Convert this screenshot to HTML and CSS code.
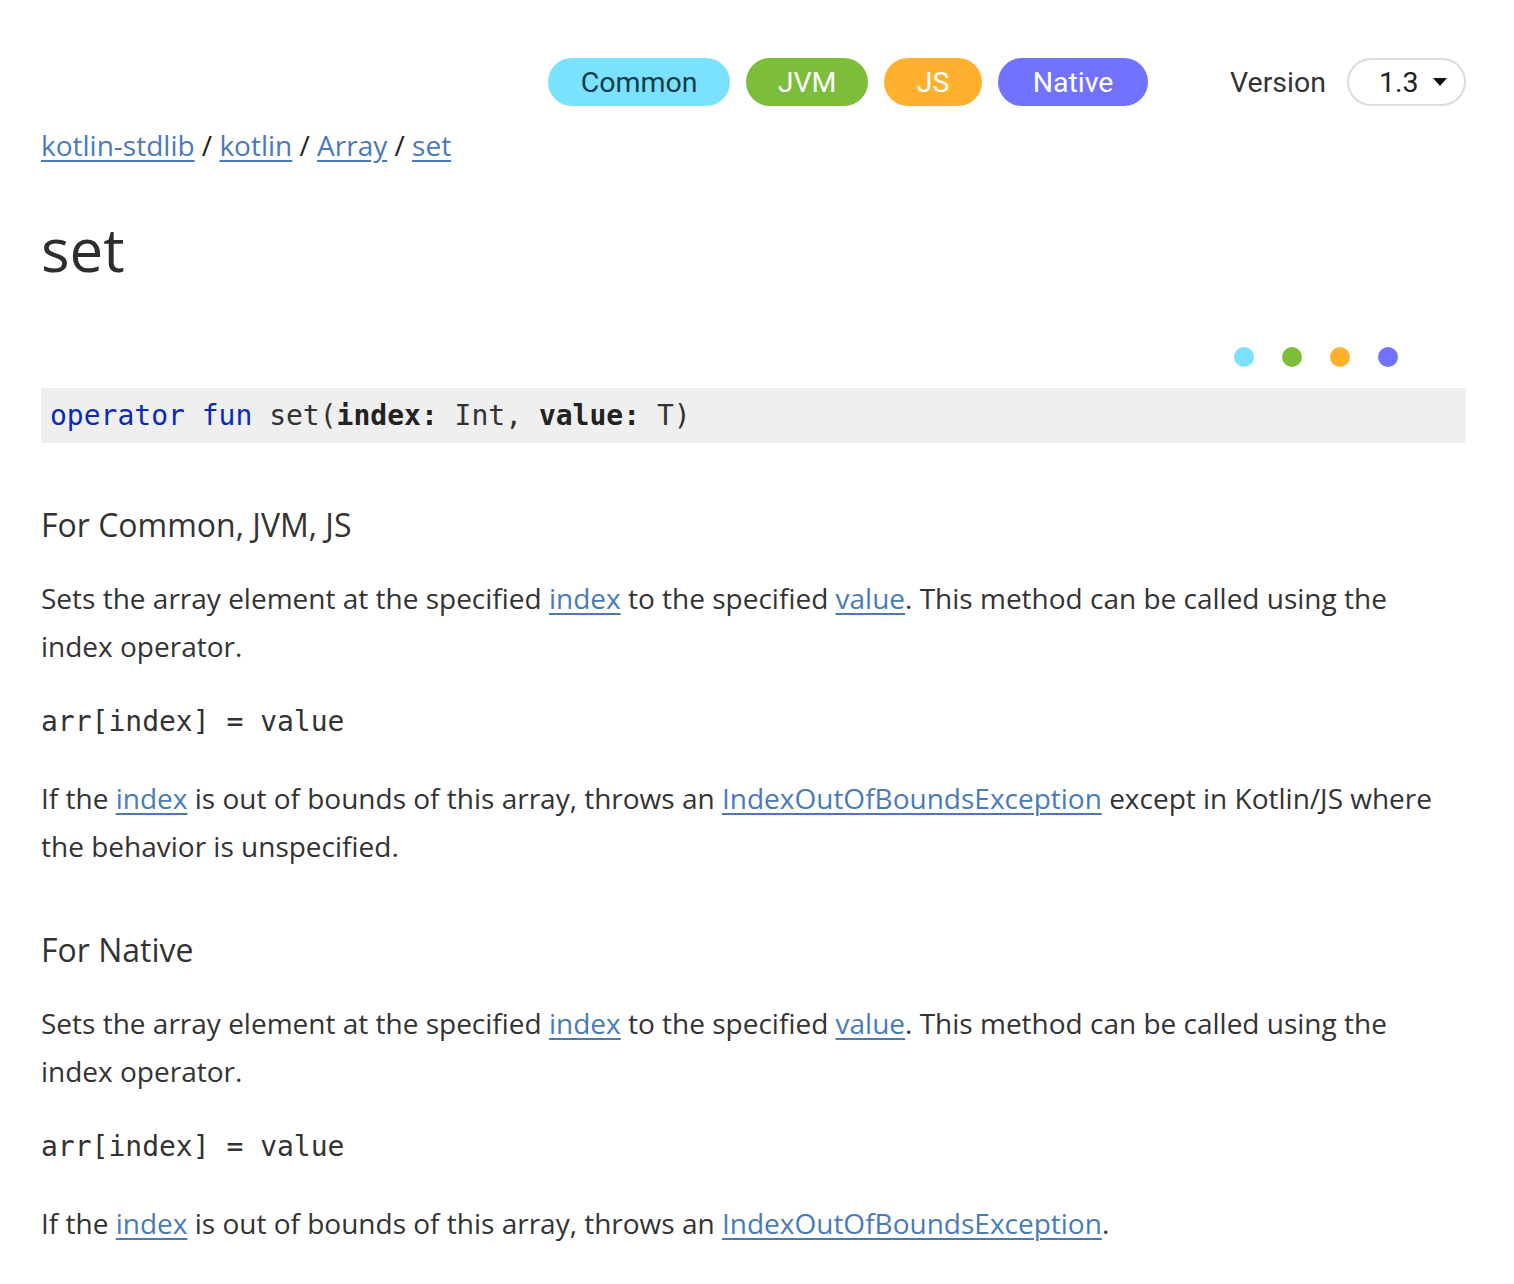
FILE: index.html
```html
<!DOCTYPE html>
<html>
<head>
<meta charset="utf-8">
<link rel="stylesheet" href="styles.css">
</head>
<body>
<div class="page">
  <header class="topbar">
    <div class="platforms">
      <span class="badge common">Common</span>
      <span class="badge jvm">JVM</span>
      <span class="badge js">JS</span>
      <span class="badge native">Native</span>
    </div>
    <div class="version">
      <span class="version-label">Version</span>
      <span class="select">1.3 <span class="caret"></span></span>
    </div>
  </header>

  <nav class="breadcrumbs">
    <a href="#">kotlin-stdlib</a> / <a href="#">kotlin</a> / <a href="#">Array</a> / <a href="#">set</a>
  </nav>

  <h1 class="title">set</h1>

  <div class="dots">
    <span class="dot common"></span>
    <span class="dot jvm"></span>
    <span class="dot js"></span>
    <span class="dot native"></span>
  </div>

  <div class="signature"><span class="kw">operator</span> <span class="kw">fun</span> set(<b>index:</b> Int, <b>value:</b> T)</div>

  <section class="platform-section">
    <h2 class="sub">For Common, JVM, JS</h2>
    <p class="para">Sets the array element at the specified <a href="#">index</a> to the specified <a href="#">value</a>. This method can be called using the index operator.</p>
    <pre class="code">arr[index] = value</pre>
    <p class="para">If the <a href="#">index</a> is out of bounds of this array, throws an <a href="#">IndexOutOfBoundsException</a> except in Kotlin/JS where the behavior is unspecified.</p>
  </section>

  <section class="platform-section second">
    <h2 class="sub">For Native</h2>
    <p class="para">Sets the array element at the specified <a href="#">index</a> to the specified <a href="#">value</a>. This method can be called using the index operator.</p>
    <pre class="code">arr[index] = value</pre>
    <p class="para">If the <a href="#">index</a> is out of bounds of this array, throws an <a href="#">IndexOutOfBoundsException</a>.</p>
  </section>
</div>
</body>
</html>
```

FILE: styles.css
```css
html, body {
  margin: 0;
  padding: 0;
  background: #fff;
}

body {
  font-family: "Open Sans", "Liberation Sans", sans-serif;
  color: #333;
  font-size: 28px;
}

a {
  color: #4a7bb8;
  text-decoration: underline;
  text-underline-offset: 4px;
  text-decoration-thickness: 2px;
}

.page {
  padding: 58px 48px 40px 41px;
}

.topbar {
  display: flex;
  justify-content: flex-end;
  align-items: center;
  height: 48px;
}

.platforms {
  display: flex;
  gap: 16px;
}

.badge {
  display: inline-flex;
  align-items: center;
  justify-content: center;
  box-sizing: border-box;
  height: 48px;
  border-radius: 24px;
  font-family: Roboto, "Liberation Sans", sans-serif;
  font-size: 28.5px;
  color: #fff;
}

.badge.common { width: 182px; background: #7ae1fe; color: #0f3d4c; }
.badge.jvm { width: 122px; background: #7cbd39; }
.badge.js { width: 98px; background: #ffb02e; }
.badge.native { width: 150px; background: #7173ff; }

.version {
  display: flex;
  align-items: center;
  margin-left: 82px;
  font-family: Roboto, "Liberation Sans", sans-serif;
  font-size: 28.5px;
  color: #333;
}

.version-label {
  margin-right: 21px;
}

.select {
  display: inline-flex;
  align-items: center;
  box-sizing: border-box;
  width: 119px;
  height: 48px;
  padding: 0 20px 0 30px;
  border: 2px solid #dcdcdc;
  border-radius: 24px;
  color: #222;
}

.caret {
  width: 0;
  height: 0;
  margin-left: 14px;
  border-left: 7px solid transparent;
  border-right: 7px solid transparent;
  border-top: 8px solid #111;
}

.breadcrumbs {
  margin-top: 15px;
  line-height: 48px;
  font-size: 28px;
  color: #222;
}

.title {
  margin: 44px 0 0;
  font-size: 60px;
  font-weight: 400;
  line-height: 72px;
  color: #2d2d2d;
}

.dots {
  display: flex;
  justify-content: flex-end;
  gap: 28px;
  margin-top: 62px;
  padding-right: 68px;
}

.dot {
  width: 20px;
  height: 20px;
  border-radius: 50%;
}

.dot.common { background: #7ae1fe; }
.dot.jvm { background: #7cbd39; }
.dot.js { background: #ffb02e; }
.dot.native { background: #7173ff; }

.signature {
  margin-top: 21px;
  height: 55px;
  line-height: 56px;
  padding: 0 9px;
  background: #efefef;
  font-family: "DejaVu Sans Mono", "Liberation Mono", monospace;
  font-size: 28px;
  color: #333;
  white-space: pre;
}

.signature b {
  font-weight: 700;
  color: #222;
}

.kw {
  color: #0a2bb8;
}

.sub {
  margin: 58px 0 0;
  font-size: 32px;
  font-weight: 400;
  line-height: 48px;
  color: #333;
}

.second .sub {
  margin-top: 56px;
}

.para {
  margin: 25px 0 0;
  max-width: 1400px;
  line-height: 48px;
}

.code {
  margin: 28px 0 0;
  font-family: "DejaVu Sans Mono", "Liberation Mono", monospace;
  font-size: 28px;
  line-height: 48px;
  color: #333;
}

.code + .para {
  margin-top: 28px;
}
```
